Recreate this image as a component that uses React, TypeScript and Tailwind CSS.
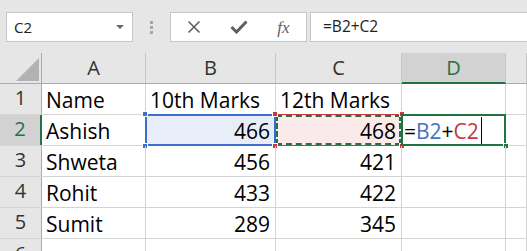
import React from "react";

const colW = ["w-[104px]", "w-[130px]", "w-[126px]", "w-[104px]", "flex-1"];

const rows = [
    ["Name", "10th Marks", "12th Marks"],
    ["Ashish", "466", "468"],
    ["Shweta", "456", "421"],
    ["Rohit", "433", "422"],
    ["Sumit", "289", "345"],
];

function Handle({ className }: { className: string }) {
    return <div className={"absolute w-[6px] h-[6px] border border-white " + className} />;
}

export default function App() {
    return (
        <div className="w-[527px] h-[251px] overflow-hidden bg-white font-['Open_Sans',sans-serif] text-black">
            {/* formula bar */}
            <div className="h-[53px] bg-[#e6e6e6] flex items-start pt-[12px] pl-[6px]">
                <div className="w-[127px] h-[30px] bg-white border border-[#c6c6c6] flex items-center justify-between pl-[7px] pr-[8px]">
                    <span className="text-[15px] text-[#222]">C2</span>
                    <span className="w-0 h-0 border-l-[4px] border-r-[4px] border-t-[4px] border-l-transparent border-r-transparent border-t-[#666]" />
                </div>
                <div className="w-[37px] h-[30px] flex flex-col items-center justify-center gap-[2px]">
                    <span className="w-[3px] h-[3px] bg-[#a6a6a6]" />
                    <span className="w-[3px] h-[3px] bg-[#a6a6a6]" />
                    <span className="w-[3px] h-[3px] bg-[#a6a6a6]" />
                </div>
                <div className="w-[137px] h-[30px] bg-white border border-[#c6c6c6] flex items-center">
                    <div className="w-[46px] flex justify-center">
                        <svg width="14" height="14" viewBox="0 0 14 14">
                            <path d="M1.5 1.5 L12.5 12.5 M12.5 1.5 L1.5 12.5" stroke="#5f5f5f" strokeWidth="1.6" />
                        </svg>
                    </div>
                    <div className="w-[44px] flex justify-center">
                        <svg width="18" height="14" viewBox="0 0 18 14">
                            <path d="M1.5 7 L6.5 12 L16.5 1.5" stroke="#5f5f5f" strokeWidth="3" fill="none" />
                        </svg>
                    </div>
                    <div className="flex-1 flex justify-center">
                        <span className="font-['Liberation_Serif',serif] italic text-[17px] text-[#5f5f5f] leading-none">fx</span>
                    </div>
                </div>
                <div className="ml-[3px] flex-1 h-[30px] bg-white border border-[#c6c6c6] border-r-0 flex items-center pl-[12px]">
                    <span className="text-[15.5px] text-[#222]">=B2+C2</span>
                </div>
            </div>

            {/* column headers */}
            <div className="h-[31px] flex bg-[#e6e6e6] border-b border-[#ababab]">
                <div className="w-[42px] border-r border-[#ababab] flex items-end justify-end pr-[2px] pb-[2px]">
                    <div className="w-0 h-0 border-l-[23px] border-b-[23px] border-l-transparent border-b-[#b2b2b2]" />
                </div>
                {["A", "B", "C", "D", ""].map((c, i) => (
                    <div
                        key={i}
                        className={
                            colW[i] +
                            " flex items-center justify-center text-[20px] border-r border-[#c6c6c6] " +
                            (c === "D" ? "bg-[#d2d2d2] text-[#217346] border-b-2 border-b-[#217346] -mb-px" : "text-[#333]")
                        }
                    >
                        {c}
                    </div>
                ))}
            </div>

            {/* rows */}
            {rows.map((r, ri) => {
                const active = ri === 1;
                return (
                    <div key={ri} className="h-[31px] flex border-b border-[#d4d4d4]">
                        <div
                            className={
                                "w-[42px] flex items-end justify-center pb-[1px] text-[20px] " +
                                (active
                                    ? "bg-[#d2d2d2] text-[#217346] border-r-2 border-[#217346]"
                                    : "bg-[#e6e6e6] text-[#333] border-r border-[#ababab]")
                            }
                        >
                            {ri + 1}
                        </div>
                        {[0, 1, 2, 3, 4].map((ci) => {
                            const v = r[ci] ?? "";
                            const num = ri > 0 && (ci === 1 || ci === 2);
                            let bg = "";
                            if (active && ci === 1) bg = "bg-[#e8eef9]";
                            if (active && ci === 2) bg = "bg-[#fbeaea]";
                            return (
                                <div
                                    key={ci}
                                    className={
                                        colW[ci] +
                                        " relative flex items-end text-[21px] leading-[28px] border-r border-[#d4d4d4] " +
                                        (num ? "justify-end pr-[5px] " : "pl-[4px] ") +
                                        bg
                                    }
                                >
                                    <span className="relative">{v}</span>
                                    {active && ci === 1 && (
                                        <>
                                            <div className="absolute -left-px -top-px -right-px -bottom-px border-2 border-[#3b6fcb]" />
                                            <Handle className="bg-[#3b6fcb] -left-[4px] -top-[4px]" />
                                            <Handle className="bg-[#3b6fcb] -left-[4px] -bottom-[4px]" />
                                        </>
                                    )}
                                    {active && ci === 2 && (
                                        <>
                                            <div className="absolute -left-px -top-px -right-px -bottom-px border border-[#c8373c]" />
                                            <div className="absolute left-0 top-0 right-0 bottom-0 border-2 border-dashed border-[#217346]" />
                                            <Handle className="bg-[#c8373c] -left-[4px] -top-[4px]" />
                                            <Handle className="bg-[#c8373c] -left-[4px] -bottom-[4px]" />
                                            <Handle className="bg-[#c8373c] -right-[4px] -top-[4px]" />
                                            <Handle className="bg-[#c8373c] -right-[4px] -bottom-[4px]" />
                                        </>
                                    )}
                                    {active && ci === 3 && (
                                        <>
                                            <span className="absolute left-[2px] bottom-0 flex items-end">
                                                <span>=</span>
                                                <span className="text-[#4472c4]">B2</span>
                                                <span>+</span>
                                                <span className="text-[#c8373c]">C2</span>
                                                <span className="ml-[2px] mb-[1px] w-px h-[27px] bg-black" />
                                            </span>
                                            <div className="absolute -left-px -top-px -right-px -bottom-px border-2 border-[#217346]" />
                                            <Handle className="bg-[#217346] -right-[4px] -bottom-[4px]" />
                                        </>
                                    )}
                                </div>
                            );
                        })}
                    </div>
                );
            })}
            <div className="h-[31px] flex">
                <div className="w-[42px] bg-[#e6e6e6] border-r border-[#ababab] flex items-end justify-center pb-[1px] text-[20px] text-[#333]">6</div>
                {[0, 1, 2, 3, 4].map((ci) => (
                    <div key={ci} className={colW[ci] + " border-r border-[#d4d4d4]"} />
                ))}
            </div>
        </div>
    );
}
